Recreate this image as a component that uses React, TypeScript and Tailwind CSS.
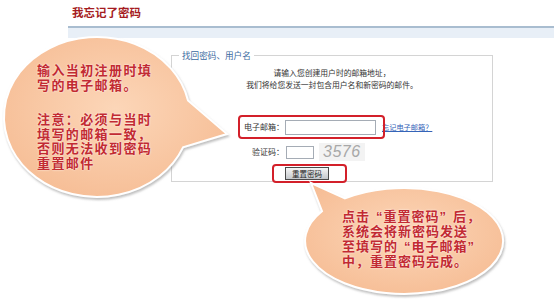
export default function App() {
  return (
    <div className="relative w-[554px] h-[304px] overflow-hidden bg-white font-['Noto_Sans_CJK_SC',sans-serif]">
      <div className="pl-[72px] pt-[4px] h-[26px] text-[11.5px] leading-[16px] font-bold text-[#a51c22]">我忘记了密码</div>
      <div className="ml-[68px] h-[12px] border-t-[2px] border-[#a9bdd0] bg-[#e8eff7]" />

      <fieldset className="ml-[171px] mt-[11px] w-[322px] h-[133px] border border-[#d4d4d4]">
        <legend className="ml-[7px] px-[3px] text-[8.6px] leading-[12px] text-[#3b6aa0]">找回密码、用户名</legend>
        <div className="pt-[6px] text-center text-[7.8px] leading-[12px] text-[#333]">
          <div>请输入您创建用户时的邮箱地址，</div>
          <div>我们将给您发送一封包含用户名和新密码的邮件。</div>
        </div>
        <div className="mt-[28px] flex items-center h-[16px] text-[8px] text-[#333]">
          <div className="w-[112px] text-right">电子邮箱：</div>
          <div className="ml-[1px] w-[91px] h-[15px] border border-[#a5acb5] bg-white" />
          <a className="ml-[6px] text-[7.2px] text-[#3564b8] underline">忘记电子邮箱？</a>
        </div>
        <div className="mt-[10px] flex items-center h-[14px] text-[8px] text-[#333]">
          <div className="w-[112px] text-right">验证码：</div>
          <div className="ml-[2px] w-[28px] h-[13px] border border-[#a5acb5] bg-white" />
          <div className="ml-[5px] px-[4px] h-[18px] flex items-center bg-[#f3f3f3] italic text-[16px] tracking-[0.5px] text-[#a8a8a8] font-['Liberation_Sans',sans-serif]">3576</div>
        </div>
        <div className="mt-[8px] pl-[113px]">
          <div className="w-[44px] h-[13px] border border-[#4a4a4a] bg-gradient-to-b from-[#f6f6f6] to-[#c4c8cc] flex items-center justify-center text-[7.5px] leading-none text-[#222]">重置密码</div>
        </div>
      </fieldset>

      <div className="absolute left-[238px] top-[115px] w-[147px] h-[24px] border-2 border-[#d3202a] rounded-[4px]" />
      <div className="absolute left-[272px] top-[164px] w-[75px] h-[19px] border-2 border-[#d3202a] rounded-[4px]" />

      <svg className="absolute left-0 top-0" width="554" height="304" viewBox="0 0 554 304">
        <defs>
          <radialGradient id="peach" cx="50%" cy="45%" r="60%">
            <stop offset="0" stopColor="#fcd6b8" />
            <stop offset="1" stopColor="#f6bd95" />
          </radialGradient>
          <filter id="sh" x="-10%" y="-10%" width="130%" height="130%">
            <feDropShadow dx="1" dy="2" stdDeviation="1.2" floodColor="#8a8a8a" floodOpacity="0.55" />
          </filter>
        </defs>
        <path d="M188,100.5 L227,134 L183,147.4 A93,80 0 1 1 188,100.5 Z" fill="url(#peach)" stroke="#fff" strokeWidth="2" filter="url(#sh)" />
        <path d="M311,183 L345,198.4 A99,53 0 1 1 322,211.3 Z" fill="url(#peach)" stroke="#fff" strokeWidth="2" filter="url(#sh)" />
      </svg>

      <div className="absolute left-[37px] top-[64px] w-[140px] font-['Liberation_Sans','Noto_Sans_CJK_SC',sans-serif] text-[13px] leading-[14.5px] font-bold tracking-[1.4px] text-[#c22a32] [text-shadow:0_0_2px_#fff]">
        <div>输入当初注册时填</div>
        <div>写的电子邮箱。</div>
        <div className="mt-[20px]">注意：必须与当时</div>
        <div>填写的邮箱一致，</div>
        <div>否则无法收到密码</div>
        <div>重置邮件</div>
      </div>

      <div className="absolute left-[342px] top-[209px] w-[150px] font-['Liberation_Sans','Noto_Sans_CJK_SC',sans-serif] text-[13px] leading-[15px] font-bold tracking-[1px] text-[#c22a32] [text-shadow:0_0_2px_#fff]">
        <div>点击<span className="pl-[6px]">“</span>重置密码<span className="pr-[6px]">”</span>后，</div>
        <div>系统会将新密码发送</div>
        <div>至填写的<span className="pl-[6px]">“</span>电子邮箱<span className="pr-[6px]">”</span></div>
        <div>中，重置密码完成。</div>
      </div>
    </div>
  );
}
